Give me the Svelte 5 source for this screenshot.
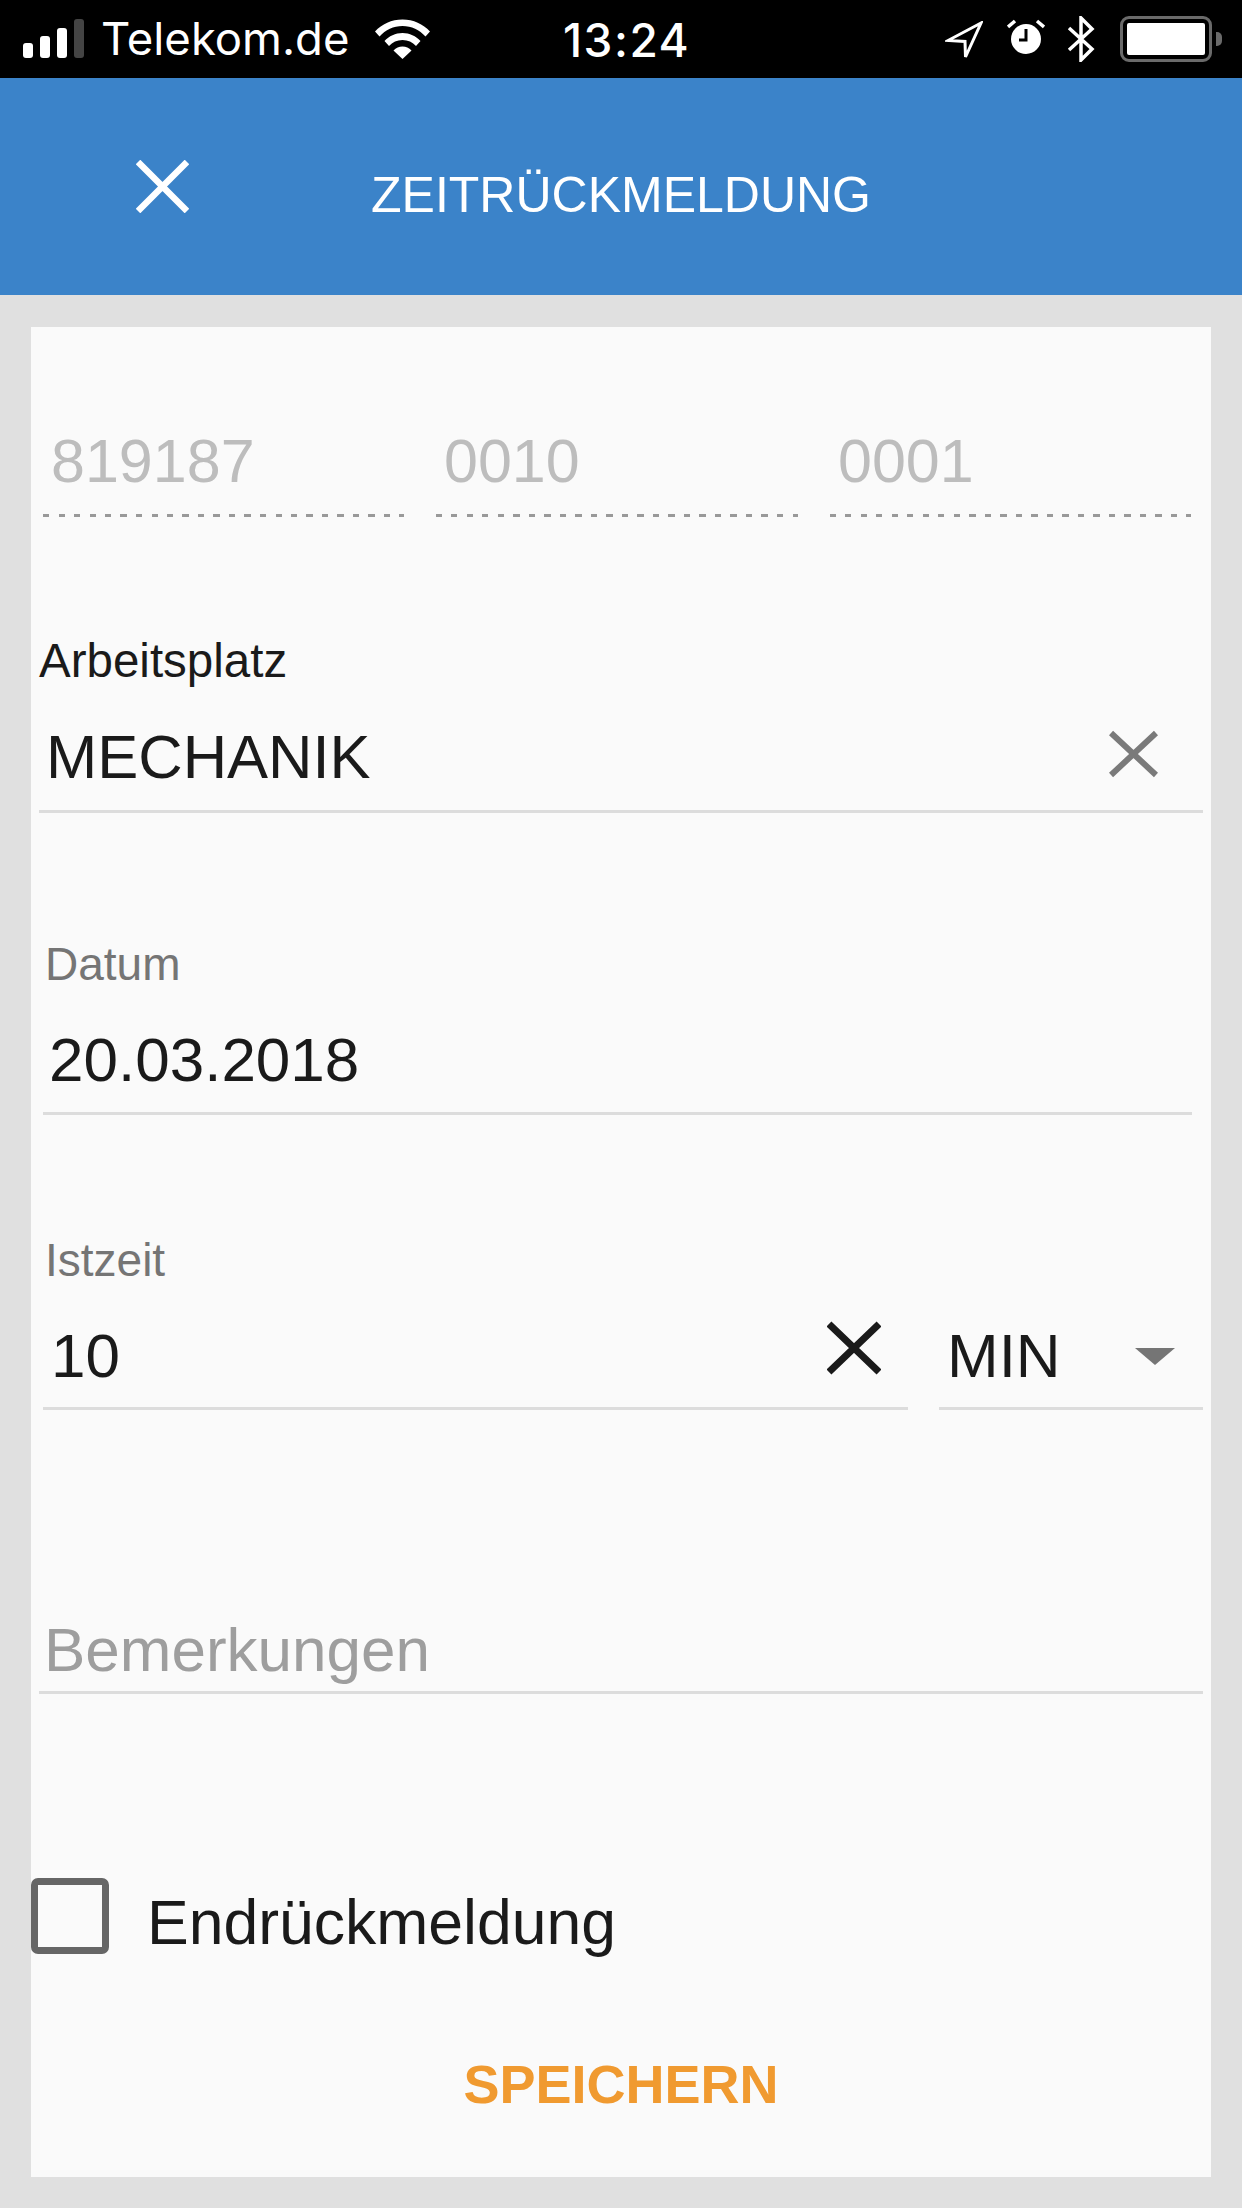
<script>
	let units = $state('MIN');
</script>

<div class="page">
	<div class="status">
		<div class="left">
			<span class="signal"><i class="b1"></i><i class="b2"></i><i class="b3"></i><i class="b4"></i></span>
			<span class="carrier">Telekom.de</span>
			<svg class="wifi" width="55" height="40" viewBox="0 0 55 40">
				<path fill="#fff" d="M0 12.5C7 5 16.5 0.5 27.500 0.500S48 5 55 12.500L50.500 17.500C44.500 11 36.500 7 27.500 7S10.500 11 4.500 17.500Z" />
				<path fill="#fff" d="M9.500 22C14 17 20.500 14 27.500 14S41 17 45.500 22L41 27C37.500 23.200 33 21 27.500 21S17.500 23.200 14 27Z" />
				<path fill="#fff" d="M18.500 31.500C21 29 24 27.500 27.500 27.500S34 29 36.500 31.500L27.500 40Z" />
			</svg>
		</div>
		<span class="time">13:24</span>
		<div class="right">
			<svg class="loc" width="38" height="38" viewBox="0 0 38 38">
				<path fill="none" stroke="#fff" stroke-width="3" stroke-linejoin="miter" d="M36 2L3 19.500L20 20.500L20.500 36Z" />
			</svg>
			<svg class="alarm" width="38" height="36" viewBox="0 0 38 36">
				<circle cx="19" cy="20" r="15" fill="#fff" />
				<path fill="none" stroke="#000" stroke-width="3" d="M19 10V21H12" />
				<path fill="none" stroke="#fff" stroke-width="3.500" d="M1 8L8 2M37 8L30 2" />
			</svg>
			<svg class="bt" width="28" height="46" viewBox="0 0 28 46">
				<path fill="none" stroke="#fff" stroke-width="3.500" d="M2 12L25 33L14 44V2L25 13L2 34" />
			</svg>
			<span class="battery"><i></i></span>
			<span class="nub"></span>
		</div>
	</div>

	<header>
		<svg class="close" width="53" height="53" viewBox="0 0 53 53">
			<path fill="none" stroke="#fff" stroke-width="6.500" d="M2 2L51 51M51 2L2 51" />
		</svg>
		<h1>ZEITRÜCKMELDUNG</h1>
	</header>

	<main class="card">
		<div class="ids">
			<div class="id">819187</div>
			<div class="id">0010</div>
			<div class="id">0001</div>
		</div>

		<div class="field workplace">
			<div class="label dark">Arbeitsplatz</div>
			<div class="value">
				<span>MECHANIK</span>
				<svg class="clear" width="49" height="48" viewBox="0 0 49 48">
					<path fill="none" stroke="#7a7a7a" stroke-width="6" d="M2 3L47 45M47 3L2 45" />
				</svg>
			</div>
		</div>

		<div class="field date">
			<div class="label">Datum</div>
			<div class="value"><span>20.03.2018</span></div>
		</div>

		<div class="actual">
			<div class="field">
				<div class="label">Istzeit</div>
				<div class="value">
					<span>10</span>
					<svg class="clear-time" width="54" height="54" viewBox="0 0 54 54">
						<path fill="none" stroke="#1a1a1a" stroke-width="7" d="M2 3L52 51M52 3L2 51" />
					</svg>
				</div>
			</div>
			<div class="field unit">
				<div class="value">
					<span>{units}</span>
					<span class="caret"></span>
				</div>
			</div>
		</div>

		<div class="field notes">
			<div class="value placeholder"><span>Bemerkungen</span></div>
		</div>

		<div class="check">
			<span class="box"></span>
			<span class="check-label">Endrückmeldung</span>
		</div>

		<div class="actions">
			<button type="button">SPEICHERN</button>
		</div>
	</main>
</div>

<style>
	:global(body) {
		margin: 0;
		background: #e0e0e0;
	}

	.page {
		width: 1242px;
		height: 2208px;
		background: #e0e0e0;
		font-family: 'Liberation Sans', Arial, sans-serif;
		color: #1a1a1a;
		overflow: hidden;
	}

	.status {
		height: 78px;
		background: #000;
		color: #fff;
		position: relative;
		font-family: Inter, 'Liberation Sans', sans-serif;
	}

	.left {
		display: flex;
		align-items: flex-start;
		padding: 19px 0 0 23px;
	}

	.signal {
		display: flex;
		align-items: flex-end;
		gap: 7px;
		height: 39px;
		width: 63px;
	}

	.signal i {
		display: block;
		width: 10px;
		border-radius: 3px;
		background: #fff;
	}

	.b1 {
		height: 15px;
	}
	.b2 {
		height: 22px;
	}
	.b3 {
		height: 30px;
	}
	.signal .b4 {
		height: 39px;
		background: #444;
	}

	.carrier {
		margin-left: 15px;
		font-size: 45.500px;
		line-height: 44px;
		margin-top: -2px;
	}

	.wifi {
		margin-left: 26px;
	}

	.time {
		position: absolute;
		left: 563px;
		top: 16px;
		font-size: 46px;
		line-height: 48px;
		letter-spacing: 1.500px;
		font-weight: 500;
	}

	.right {
		position: absolute;
		left: 945px;
		top: 16px;
		display: flex;
		align-items: flex-start;
	}

	.loc {
		margin-top: 5px;
	}

	.alarm {
		margin: 3px 0 0 24px;
	}

	.bt {
		margin-left: 22px;
	}

	.battery {
		display: block;
		box-sizing: border-box;
		width: 92px;
		height: 46px;
		margin-left: 25px;
		padding: 4px;
		border: 3px solid #6a6a6a;
		border-radius: 9px;
	}

	.battery i {
		display: block;
		height: 100%;
		background: #fff;
		border-radius: 2px;
	}

	.nub {
		display: block;
		width: 6px;
		height: 14px;
		margin: 16px 0 0 4px;
		background: #6a6a6a;
		border-radius: 0 5px 5px 0;
	}

	header {
		height: 217px;
		background: #3b83c9;
		position: relative;
		display: flex;
		justify-content: center;
	}

	.close {
		position: absolute;
		left: 136px;
		top: 82px;
	}

	h1 {
		margin: 87px 0 0;
		font-size: 50px;
		line-height: 60px;
		font-weight: 400;
		color: #fff;
	}

	.card {
		box-sizing: border-box;
		height: 1850px;
		margin: 32px 31px 0;
		padding-top: 99px;
		background: #fafafa;
	}

	.ids {
		display: grid;
		grid-template-columns: 361px 362px 361px;
		gap: 32px;
		margin: 0 20px 0 12px;
	}

	.id {
		padding: 0 0 21px 8px;
		font-size: 61px;
		line-height: 70px;
		color: #bdbdbd;
		background: repeating-linear-gradient(90deg, #999 0 6px, transparent 6px 15.500px) bottom / 100% 3px no-repeat;
	}

	.field {
		border-bottom: 3px solid #dcdcdc;
	}

	.label {
		font-size: 46px;
		line-height: 50px;
		margin-bottom: 36px;
		color: #757575;
	}

	.label.dark {
		font-size: 47.500px;
		color: #1a1a1a;
	}

	.value {
		display: flex;
		align-items: center;
		justify-content: space-between;
		padding: 0 0 18px 7px;
		font-size: 62px;
		line-height: 70px;
	}

	.workplace {
		margin: 119px 8px 0;
	}

	.workplace .value {
		font-size: 61.500px;
	}

	.clear {
		margin: -6px 45px 0 0;
	}

	.date {
		margin: 126px 19px 0 12px;
	}

	.date .label {
		margin-left: 2px;
	}

	.date .value {
		padding: 0 0 17px 6px;
	}

	.actual {
		display: grid;
		grid-template-columns: 865px 264px;
		align-items: end;
		gap: 31px;
		margin: 120px 8px 0 12px;
	}

	.actual .label {
		margin-left: 2px;
	}

	.actual .value {
		padding: 0 0 16px 8px;
	}

	.clear-time {
		margin: -16px 27px 0 0;
	}

	.unit .value {
		padding-left: 8px;
	}

	.caret {
		width: 0;
		height: 0;
		margin-right: 28px;
		border-left: 20px solid transparent;
		border-right: 20px solid transparent;
		border-top: 17px solid #757575;
	}

	.notes {
		margin: 205px 8px 0;
	}

	.notes .value {
		padding: 0 0 6px 5px;
		color: #9e9e9e;
	}

	.check {
		display: flex;
		align-items: flex-start;
		gap: 38px;
		margin-top: 184px;
	}

	.box {
		box-sizing: border-box;
		width: 78px;
		height: 76px;
		border: 7px solid #666;
		border-radius: 7px;
	}

	.check-label {
		margin-top: 9px;
		font-size: 62.500px;
		line-height: 70px;
	}

	.actions {
		display: flex;
		justify-content: center;
		margin-top: 95px;
	}

	button {
		padding: 0;
		border: 0;
		background: none;
		font: bold 54px/64px 'Liberation Sans', Arial, sans-serif;
		color: #f09a30;
	}
</style>
